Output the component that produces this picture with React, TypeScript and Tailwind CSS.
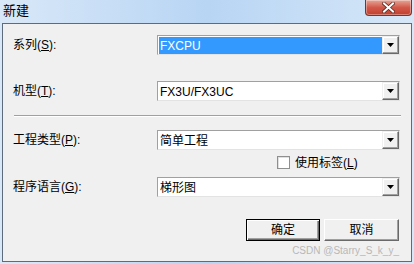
import React from 'react';

const cjk = { fontFamily: '"Liberation Sans", "Noto Sans CJK SC", sans-serif' };

function Combo({ value, selected }: { value: string; selected?: boolean }) {
  return (
    <div className="flex h-[20px] w-[243px] border border-t-[#a0a0a0] border-l-[#a0a0a0] border-r-[#e3e3e3] border-b-[#e3e3e3] shadow-[inset_1px_1px_0_#696969]">
      <div className="flex flex-1 items-center bg-white pl-[1px] pt-[1px]">
        <span
          className={`flex h-full flex-1 items-center pl-[1px] text-[12px] leading-none ${selected ? 'bg-[#3399ff] text-white' : 'text-black'}`}
        >
          {value}
        </span>
      </div>
      <div className="flex w-[17px] items-center justify-center border border-t-[#f0f0f0] border-l-[#f0f0f0] border-r-[#696969] border-b-[#696969] bg-[#f0f0f0] shadow-[inset_-1px_-1px_0_#a0a0a0,inset_1px_1px_0_#ffffff]">
        <svg width="7" height="4" viewBox="0 0 7 4">
          <path d="M0 0H7L3.5 4Z" fill="#000" />
        </svg>
      </div>
    </div>
  );
}

function Label({ text, acc }: { text: string; acc: string }) {
  return (
    <div className="w-[154px] pl-[10px] text-[12px] text-black">
      {text}(<span className="underline underline-offset-1">{acc}</span>):
    </div>
  );
}

function Row({ text, acc, value, selected }: { text: string; acc: string; value: string; selected?: boolean }) {
  return (
    <div className="flex items-center">
      <Label text={text} acc={acc} />
      <Combo value={value} selected={selected} />
    </div>
  );
}

export default function App() {
  return (
    <div
      className="flex h-[264px] w-[414px] flex-col bg-gradient-to-r from-[#d9e8f8] via-[#b8d5f4] to-[#d6e7f8]"
      style={cjk}
    >
      {/* title bar */}
      <div className="flex h-[23px] items-start justify-between">
        <span className="pl-[3px] pt-[2px] text-[13px] leading-[18px] text-black">新建</span>
        <div className="mr-[2px] flex h-[16px] w-[47px] items-center justify-center rounded-b-[4px] border border-t-0 border-[#7a3427] bg-gradient-to-b from-[#e5a597] via-[#d2584a] to-[#c23f2d] shadow-[inset_0_0_0_1px_rgba(255,255,255,0.35)]">
          <svg width="13" height="11" viewBox="0 0 13 11">
            <path d="M2 1.5L11 9.5M11 1.5L2 9.5" stroke="#5a2a22" strokeWidth="3.6" strokeLinecap="square" />
            <path d="M2 1.5L11 9.5M11 1.5L2 9.5" stroke="#ffffff" strokeWidth="2" strokeLinecap="square" />
          </svg>
        </div>
      </div>

      {/* client area */}
      <div className="relative mx-[2px] flex h-[239px] flex-col border border-[#5d6b7a] bg-[#f0f0f0]">
        <div className="mt-[11px]">
          <Row text="系列" acc="S" value="FXCPU" selected />
        </div>
        <div className="mt-[26px]">
          <Row text="机型" acc="T" value="FX3U/FX3UC" />
        </div>
        <div className="ml-[11px] mr-[10px] mt-[14px] h-[2px] border-t border-b border-t-[#a0a0a0] border-b-white" />
        <div className="mt-[13px]">
          <Row text="工程类型" acc="P" value="简单工程" />
        </div>
        <div className="mt-[5px] flex h-[15px] items-center pl-[274px]">
          <div className="h-[13px] w-[13px] border border-[#8e8f8f] bg-white shadow-[inset_1px_1px_0_#e0e0e0]" />
          <span className="pl-[5px] text-[12px] leading-none text-black">
            使用标签(<span className="underline underline-offset-1">L</span>)
          </span>
        </div>
        <div className="mt-[7px]">
          <Row text="程序语言" acc="G" value="梯形图" />
        </div>
        <div className="mt-[22px] flex gap-[4px] pl-[243px]">
          <button className="flex h-[22px] w-[74px] items-center justify-center border border-black bg-[#f0f0f0] text-[12px] text-black shadow-[inset_1px_1px_0_#ffffff,inset_-1px_-1px_0_#696969,inset_-2px_-2px_0_#a0a0a0]">
            确定
          </button>
          <button className="flex h-[22px] w-[75px] items-center justify-center border border-t-white border-l-white border-r-[#696969] border-b-[#696969] bg-[#f0f0f0] text-[12px] text-black shadow-[inset_-1px_-1px_0_#a0a0a0]">
            取消
          </button>
        </div>
        <span
          className="absolute bottom-[5px] right-[12px] text-[10px] leading-none text-[#b8b8b8]"
          style={{ fontFamily: '"Liberation Sans", sans-serif' }}
        >
          CSDN @Starry_S_k_y_
        </span>
      </div>
    </div>
  );
}
